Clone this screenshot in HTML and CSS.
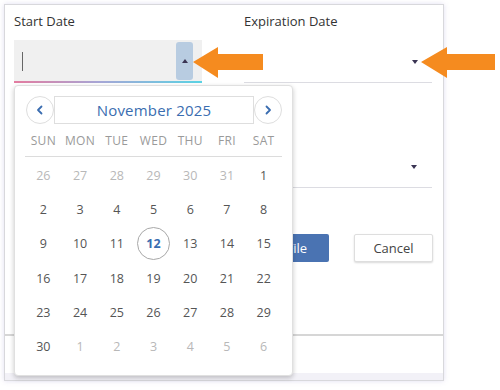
FILE: index.html
```html
<!DOCTYPE html>
<html>
<head>
<title>Date Picker</title>
<link rel="stylesheet" href="styles.css">
</head>
<body>
<div class="frame">
  <div class="fields">
    <div class="field">
      <label class="field-label">Start Date</label>
      <div class="date-input">
        <span class="caret"></span>
        <span class="toggle"><span class="tri-up"></span></span>
      </div>
    </div>
    <div class="field">
      <label class="field-label">Expiration Date</label>
      <div class="select-input"><span class="tri-down"></span></div>
    </div>
    <div class="field"></div>
    <div class="field">
      <div class="select-input second"><span class="tri-down"></span></div>
    </div>
  </div>
  <div class="actions">
    <button class="btn btn-primary">File</button>
    <button class="btn btn-plain">Cancel</button>
  </div>
  <div class="footer"></div>

  <div class="calendar">
    <div class="cal-head">
      <button class="nav-btn"><svg width="10" height="10" viewBox="0 0 10 10"><path d="M6.5 1.5 L3 5 L6.5 8.5" fill="none" stroke="#3a6db0" stroke-width="1.8" stroke-linecap="round" stroke-linejoin="round"/></svg></button>
      <div class="cal-title">November 2025</div>
      <button class="nav-btn"><svg width="10" height="10" viewBox="0 0 10 10"><path d="M3.5 1.5 L7 5 L3.5 8.5" fill="none" stroke="#3a6db0" stroke-width="1.8" stroke-linecap="round" stroke-linejoin="round"/></svg></button>
    </div>
    <div class="cal-grid weekdays">
      <span>SUN</span><span>MON</span><span>TUE</span><span>WED</span><span>THU</span><span>FRI</span><span>SAT</span>
    </div>
    <div class="cal-grid days">
      <span class="muted">26</span><span class="muted">27</span><span class="muted">28</span><span class="muted">29</span><span class="muted">30</span><span class="muted">31</span><span>1</span>
      <span>2</span><span>3</span><span>4</span><span>5</span><span>6</span><span>7</span><span>8</span>
      <span>9</span><span>10</span><span>11</span><span class="today"><b>12</b></span><span>13</span><span>14</span><span>15</span>
      <span>16</span><span>17</span><span>18</span><span>19</span><span>20</span><span>21</span><span>22</span>
      <span>23</span><span>24</span><span>25</span><span>26</span><span>27</span><span>28</span><span>29</span>
      <span>30</span><span class="muted">1</span><span class="muted">2</span><span class="muted">3</span><span class="muted">4</span><span class="muted">5</span><span class="muted">6</span>
    </div>
  </div>
</div>

<svg class="arrow arrow-start" width="70" height="34" viewBox="0 0 70 34"><polygon points="0,16 25,1 25,8 70,8 70,24 25,24 25,32" fill="#f58b1f"/></svg>
<svg class="arrow arrow-exp" width="74" height="34" viewBox="0 0 74 34"><polygon points="0,16 26,1 26,8 74,8 74,24 26,24 26,32" fill="#f58b1f"/></svg>
</body>
</html>
```

FILE: styles.css
```css
body {
font-family: "Open Sans", "Liberation Sans", sans-serif;
margin: 0;
padding: 0;
background-color: #fff;
position: relative;
width: 500px;
height: 390px;
overflow: hidden;
}
.frame {
position: relative;
margin: 4px 0 0 4px;
width: 440px;
height: 377px;
box-sizing: border-box;
border: 1px solid #d8d8dc;
box-shadow: 0 0 5px rgba(160, 150, 210, 0.3);
display: flex;
flex-direction: column;
}
.fields {
display: grid;
grid-template-columns: 188px 188px;
column-gap: 42px;
row-gap: 62px;
padding: 8px 0 0 9px;
}
.field-label {
display: block;
height: 16px;
line-height: 16px;
margin-bottom: 11px;
font-size: 13px;
color: #333;
}
.date-input {
position: relative;
height: 43px;
box-sizing: border-box;
background-color: #f0f0f0;
}
.date-input::after {
content: "";
position: absolute;
left: 0;
right: 0;
bottom: 0;
height: 2px;
background: linear-gradient(to right, #e47ca0, #a7a6d6 45%, #5ad3e4);
}
.caret {
position: absolute;
left: 8px;
top: 12px;
width: 1px;
height: 19px;
background-color: #666;
}
.toggle {
position: absolute;
left: 162px;
top: 2px;
width: 17px;
height: 38px;
border-radius: 3px;
background-color: #b8cce1;
display: flex;
align-items: center;
justify-content: center;
}
.tri-up {
width: 0;
height: 0;
border-left: 3.5px solid transparent;
border-right: 3.5px solid transparent;
border-bottom: 4px solid #3a3453;
}
.select-input {
height: 43px;
box-sizing: border-box;
border-bottom: 1px solid #dcdce2;
display: flex;
align-items: center;
justify-content: flex-end;
padding-right: 14px;
}
.select-input.second {
height: 43px;
padding-right: 15px;
}
.tri-down {
width: 0;
height: 0;
margin-top: 2px;
border-left: 3.5px solid transparent;
border-right: 3.5px solid transparent;
border-top: 4px solid #3a3453;
}
.actions {
display: flex;
justify-content: flex-end;
gap: 25px;
padding-right: 10px;
margin-top: 46px;
}
.btn {
height: 28px;
font-family: inherit;
font-size: 13px;
border-radius: 2px;
cursor: pointer;
}
.btn-primary {
padding: 0 22px 0 40px;
background-color: #4a73b2;
color: #fff;
border: none;
}
.btn-plain {
width: 79px;
background-color: #fff;
color: #444;
border: 1px solid #dedede;
box-shadow: 0 1px 2px rgba(0, 0, 0, 0.15);
}
.footer {
margin-top: 72px;
flex: 1;
border-top: 2px solid #d6d6d6;
background: linear-gradient(to bottom, #fff 37px, #f2f1f7 37px);
}
.calendar {
position: absolute;
left: 9px;
top: 80px;
width: 279px;
height: 291px;
box-sizing: border-box;
background-color: #fff;
border: 1px solid #e0e0e0;
border-radius: 4px;
box-shadow: 0 2px 5px rgba(0, 0, 0, 0.22);
padding: 10px 10px 0 11px;
}
.cal-head {
display: flex;
align-items: center;
height: 28px;
}
.nav-btn {
width: 28px;
height: 28px;
padding: 0;
border-radius: 50%;
border: 1px solid #dedede;
background-color: #fff;
display: flex;
align-items: center;
justify-content: center;
flex-shrink: 0;
}
.cal-title {
flex: 1;
height: 28px;
box-sizing: border-box;
border: 1px solid #dedede;
text-align: center;
line-height: 26px;
font-size: 15px;
letter-spacing: 0.2px;
color: #3a6db0;
}
.cal-grid {
display: grid;
grid-template-columns: repeat(7, 1fr);
margin-left: -1px;
text-align: center;
}
.weekdays {
margin-top: 4px;
height: 28px;
line-height: 26px;
border-bottom: 1px solid #dcdcdc;
font-size: 12px;
letter-spacing: 0.3px;
color: #9a9a9a;
}
.days {
margin-top: 1px;
grid-auto-rows: 34.3px;
font-size: 12.5px;
color: #555;
}
.days span {
display: flex;
align-items: center;
justify-content: center;
}
.days .muted {
color: #b8b8b8;
}
.today b {
width: 33px;
height: 33px;
box-sizing: border-box;
border: 1px solid #a8a8a8;
border-radius: 50%;
display: flex;
align-items: center;
justify-content: center;
color: #3a6db0;
font-weight: bold;
}
.arrow {
position: absolute;
}
.arrow-start {
left: 193px;
top: 46px;
}
.arrow-exp {
left: 421px;
top: 46px;
}
```
